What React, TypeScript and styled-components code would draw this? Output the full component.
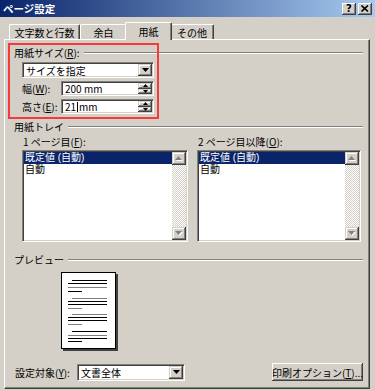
import React from 'react';
import styled, { createGlobalStyle } from 'styled-components';

const GlobalStyle = createGlobalStyle`
  html, body {
    margin: 0;
    padding: 0;
    background: #d4d0c8;
  }
  body {
    font-family: "Noto Sans CJK JP", "Noto Sans", sans-serif;
    font-size: 10px;
    color: #000;
  }
`;

const Dialog = styled.div`
  width: 375px;
  height: 390px;
  overflow: hidden;
  background: #d4d0c8;
  display: flex;
  flex-direction: column;
`;

const TitleBar = styled.div`
  flex-shrink: 0;
  height: 17px;
  display: flex;
  align-items: center;
  padding: 0 3px;
  background: linear-gradient(to right, #0a246a, #a6caf0);
`;

const TitleText = styled.span`
  flex: 1;
  color: #fff;
  font-weight: bold;
  font-size: 10.5px;
  line-height: 17px;
`;

const CaptionBtn = styled.div`
  box-sizing: border-box;
  width: 14px;
  height: 12px;
  margin-left: 2px;
  background: #d4d0c8;
  box-shadow: inset -1px -1px #404040, inset 1px 1px #fff, inset -2px -2px #808080;
  display: flex;
  align-items: center;
  justify-content: center;
  font: bold 10px "DejaVu Sans", sans-serif;
  line-height: 10px;
`;

const TabStrip = styled.div`
  flex-shrink: 0;
  height: 17px;
  margin-top: 5px;
  padding-left: 9px;
  display: flex;
  align-items: flex-end;
  position: relative;
  z-index: 1;
`;

const Tab = styled.div<{ $w: number; $active?: boolean }>`
  box-sizing: border-box;
  width: ${(p) => p.$w}px;
  height: ${(p) => (p.$active ? 18 : 15)}px;
  margin: 0 ${(p) => (p.$active ? -2 : 0)}px ${(p) => (p.$active ? -1 : 0)}px;
  background: #d4d0c8;
  border-top: 1px solid #fff;
  border-left: 1px solid #fff;
  border-right: 1px solid #404040;
  border-radius: 2px 2px 0 0;
  box-shadow: inset -1px 0 #808080;
  display: flex;
  align-items: center;
  justify-content: center;
  padding-top: ${(p) => (p.$active ? 0 : 1)}px;
  position: relative;
  z-index: ${(p) => (p.$active ? 2 : 1)};
`;

const Panel = styled.div`
  box-sizing: border-box;
  position: relative;
  margin-left: 4px;
  width: 366px;
  height: 350px;
  border-top: 1px solid #fff;
  border-left: 1px solid #fff;
  border-right: 1px solid #404040;
  border-bottom: 1px solid #404040;
  box-shadow: inset -1px -1px #808080;
  padding: 7px 6px 0 9px;
  display: flex;
  flex-direction: column;
`;

const GroupHead = styled.div<{ $mt?: number }>`
  display: flex;
  align-items: center;
  gap: 4px;
  height: 11px;
  line-height: 11px;
  margin-top: ${(p) => p.$mt ?? 0}px;
  white-space: nowrap;

  &::after {
    content: '';
    flex: 1;
    border-top: 1px solid #808080;
    border-bottom: 1px solid #fff;
  }
`;

const Indent = styled.div<{ $mt?: number }>`
  padding-left: 8px;
  margin-top: ${(p) => p.$mt ?? 0}px;
  display: flex;
  flex-direction: column;
`;

const U = styled.span`
  text-decoration: underline;
`;

// へこんだ入力欄 (combo, spin, list 共通)
const Field = styled.div<{ $w: number; $h: number }>`
  box-sizing: border-box;
  width: ${(p) => p.$w}px;
  height: ${(p) => p.$h}px;
  background: #fff;
  border: 1px solid;
  border-color: #808080 #fff #fff #808080;
  box-shadow: inset 1px 1px #404040, inset -1px -1px #d4d0c8;
  padding: 1px;
  display: flex;
  align-items: stretch;
`;

const FieldText = styled.div`
  flex: 1;
  display: flex;
  align-items: center;
  padding-left: 2px;
  line-height: 11px;
  white-space: nowrap;
`;

const Caret = styled.span`
  display: inline-block;
  width: 1px;
  height: 10px;
  background: #000;
  margin: 0 1px 0 1px;
`;

const RaisedBtn = styled.div<{ $w: number }>`
  box-sizing: border-box;
  width: ${(p) => p.$w}px;
  flex-shrink: 0;
  background: #d4d0c8;
  box-shadow: inset -1px -1px #404040, inset 1px 1px #d4d0c8, inset -2px -2px #808080, inset 2px 2px #fff;
  display: flex;
  align-items: center;
  justify-content: center;
`;

const SpinCol = styled.div`
  width: 14px;
  display: flex;
  flex-direction: column;
`;

const SpinBtn = styled(RaisedBtn)`
  flex: 1;
`;

const Row = styled.div<{ $mt?: number }>`
  display: flex;
  align-items: center;
  margin-top: ${(p) => p.$mt ?? 0}px;
`;

const Label = styled.div<{ $w: number }>`
  width: ${(p) => p.$w}px;
  line-height: 11px;
  white-space: nowrap;
`;

const ListCols = styled.div`
  display: flex;
  gap: 9px;
`;

const ListCol = styled.div`
  display: flex;
  flex-direction: column;
  gap: 3px;
`;

const ListLabel = styled.div`
  height: 11px;
  line-height: 11px;
  padding-left: 1px;
  white-space: nowrap;
`;

const ListBody = styled.div`
  flex: 1;
  display: flex;
  flex-direction: column;
`;

const ListItem = styled.div<{ $sel?: boolean }>`
  height: 12px;
  line-height: 12px;
  padding-left: 1px;
  font-family: "Liberation Sans", "Noto Sans CJK JP", sans-serif;
  white-space: nowrap;
  background: ${(p) => (p.$sel ? '#0a246a' : 'transparent')};
  color: ${(p) => (p.$sel ? '#fff' : '#000')};
`;

const ScrollBar = styled.div`
  width: 14px;
  display: flex;
  flex-direction: column;
`;

const ScrollTrack = styled.div`
  flex: 1;
  background-image: repeating-conic-gradient(#fff 0 25%, #d4d0c8 0 50%);
  background-size: 2px 2px;
`;

const ScrollBtn = styled(RaisedBtn)`
  height: 13px;
`;

const PreviewPage = styled.div`
  box-sizing: border-box;
  width: 55px;
  height: 77px;
  margin: 7px 0 0 47px;
  background: #fff;
  border: 1px solid #000;
  box-shadow: 2px 2px 0 #404040;
`;

const BottomRow = styled.div`
  display: flex;
  align-items: center;
  justify-content: space-between;
  margin-top: 14px;
  padding-left: 1px;
`;

const PushButton = styled.div`
  box-sizing: border-box;
  width: 91px;
  height: 18px;
  background: #d4d0c8;
  box-shadow: inset -1px -1px #404040, inset 1px 1px #fff, inset -2px -2px #808080, inset 2px 2px #d4d0c8;
  display: flex;
  align-items: center;
  justify-content: center;
  line-height: 11px;
  white-space: nowrap;
`;

// 注記用の赤枠 (スクリーンショット上に重ねたもの)
const RedMark = styled.div`
  position: absolute;
  left: 3px;
  top: 3px;
  width: 151px;
  height: 76px;
  box-sizing: border-box;
  border: 2px solid #f43a3a;
  pointer-events: none;
`;

const DownArrow = () => (
  <svg width="7" height="4" viewBox="0 0 7 4">
    <path d="M0 0h7L3.5 4z" fill="#000" />
  </svg>
);

const SmallArrow = ({ up }: { up?: boolean }) => (
  <svg width="5" height="3" viewBox="0 0 5 3">
    <path d={up ? 'M2.5 0L5 3H0z' : 'M0 0h5L2.5 3z'} fill="#000" />
  </svg>
);

const GrayArrow = ({ up }: { up?: boolean }) => (
  <svg width="8" height="5" viewBox="0 0 8 5">
    <path d={up ? 'M4.5 1L8 5H1z' : 'M1 1h7L4.5 5z'} fill="#fff" />
    <path d={up ? 'M3.5 0L7 4H0z' : 'M0 0h7L3.5 4z'} fill="#808080" />
  </svg>
);

const CloseGlyph = () => (
  <svg width="8" height="7" viewBox="0 0 8 7">
    <path d="M0.5 0.5L7 6.5M7 0.5L0.5 6.5" stroke="#000" strokeWidth="1.6" />
  </svg>
);

type PreviewLine = { y: number; kind: 'indent' | 'full' | 'short'; gray?: boolean };

const previewLines: PreviewLine[] = [
  { y: 7, kind: 'indent' },
  { y: 10, kind: 'full' },
  { y: 14, kind: 'full', gray: true },
  { y: 18, kind: 'short' },
  { y: 25, kind: 'indent', gray: true },
  { y: 28, kind: 'full' },
  { y: 31, kind: 'full' },
  { y: 35, kind: 'short', gray: true },
  { y: 41, kind: 'indent', gray: true },
  { y: 44, kind: 'full' },
  { y: 47, kind: 'full' },
  { y: 51, kind: 'short', gray: true },
  { y: 58, kind: 'indent' },
  { y: 62, kind: 'full', gray: true },
  { y: 65, kind: 'full' },
  { y: 68, kind: 'short' },
];

const PageLines = () => (
  <svg width="53" height="75" viewBox="0 0 53 75">
    {previewLines.map((l, i) => {
      const x1 = l.kind === 'indent' ? 10 : 6;
      const x2 = l.kind === 'short' ? 20 : 45;
      return (
        <line
          key={i}
          x1={x1}
          x2={x2}
          y1={l.y + 0.5}
          y2={l.y + 0.5}
          stroke={l.gray ? '#808080' : '#000'}
          strokeWidth="1"
        />
      );
    })}
  </svg>
);

const ListBox = ({ w }: { w: number }) => (
  <Field $w={w} $h={92}>
    <ListBody>
      <ListItem $sel>既定値 (自動)</ListItem>
      <ListItem>自動</ListItem>
    </ListBody>
    <ScrollBar>
      <ScrollBtn $w={14}>
        <GrayArrow up />
      </ScrollBtn>
      <ScrollTrack />
      <ScrollBtn $w={14}>
        <GrayArrow />
      </ScrollBtn>
    </ScrollBar>
  </Field>
);

const SpinBox = ({ children }: { children: React.ReactNode }) => (
  <Field $w={93} $h={15}>
    <FieldText>{children}</FieldText>
    <SpinCol>
      <SpinBtn $w={14}>
        <SmallArrow up />
      </SpinBtn>
      <SpinBtn $w={14}>
        <SmallArrow />
      </SpinBtn>
    </SpinCol>
  </Field>
);

export default function App() {
  return (
    <>
      <GlobalStyle />
      <Dialog>
        <TitleBar>
          <TitleText>ページ設定</TitleText>
          <CaptionBtn>?</CaptionBtn>
          <CaptionBtn>
            <CloseGlyph />
          </CaptionBtn>
        </TitleBar>

        <TabStrip>
          <Tab $w={71}>文字数と行数</Tab>
          <Tab $w={47}>余白</Tab>
          <Tab $w={47} $active>
            用紙
          </Tab>
          <Tab $w={44}>その他</Tab>
        </TabStrip>

        <Panel>
          <GroupHead>
            <span>
              用紙サイズ(<U>R</U>):
            </span>
          </GroupHead>
          <Indent $mt={4}>
            <Field $w={132} $h={16}>
              <FieldText>サイズを指定</FieldText>
              <RaisedBtn $w={14}>
                <DownArrow />
              </RaisedBtn>
            </Field>
            <Row $mt={3}>
              <Label $w={39}>
                幅(<U>W</U>):
              </Label>
              <SpinBox>200 mm</SpinBox>
            </Row>
            <Row $mt={3}>
              <Label $w={39}>
                高さ(<U>E</U>):
              </Label>
              <SpinBox>
                21
                <Caret />
                mm
              </SpinBox>
            </Row>
          </Indent>

          <GroupHead $mt={7}>
            <span>用紙トレイ</span>
          </GroupHead>
          <Indent $mt={4}>
            <ListCols>
              <ListCol>
                <ListLabel>
                  1 ページ目(<U>F</U>):
                </ListLabel>
                <ListBox w={166} />
              </ListCol>
              <ListCol>
                <ListLabel>
                  2 ページ目以降(<U>O</U>):
                </ListLabel>
                <ListBox w={164} />
              </ListCol>
            </ListCols>
          </Indent>

          <GroupHead $mt={12}>
            <span>プレビュー</span>
          </GroupHead>
          <PreviewPage>
            <PageLines />
          </PreviewPage>

          <BottomRow>
            <Row>
              <Label $w={62}>
                設定対象(<U>Y</U>):
              </Label>
              <Field $w={108} $h={17}>
                <FieldText>文書全体</FieldText>
                <RaisedBtn $w={14}>
                  <DownArrow />
                </RaisedBtn>
              </Field>
            </Row>
            <PushButton>
              印刷オプション(<U>T</U>)...
            </PushButton>
          </BottomRow>

          <RedMark />
        </Panel>
      </Dialog>
    </>
  );
}
